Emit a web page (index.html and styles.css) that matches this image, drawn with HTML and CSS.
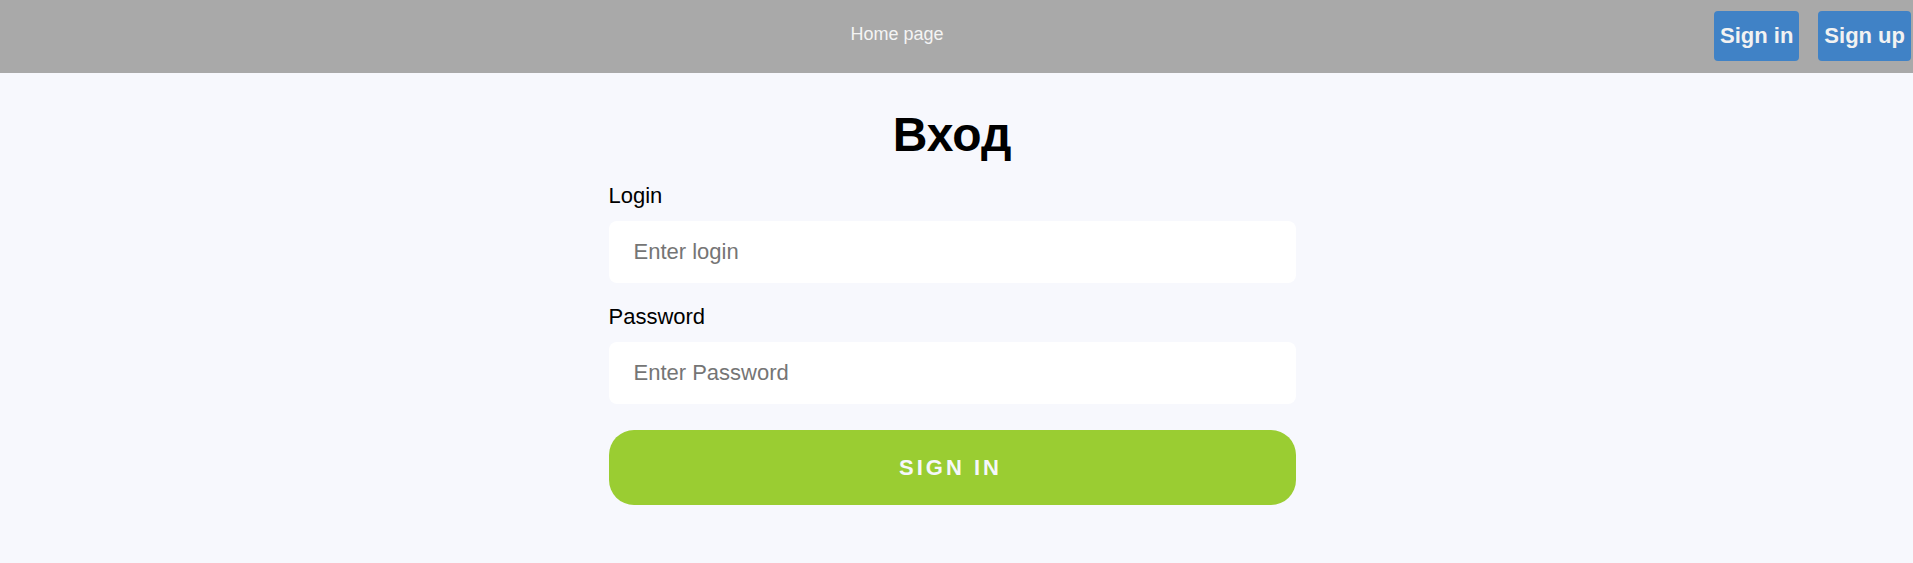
FILE: index.html
```html
<!DOCTYPE html>
<html lang="ru">
<head>
<meta charset="utf-8">
<title>Вход</title>
<link rel="stylesheet" href="styles.css">
</head>
<body>
<header class="topbar">
  <nav class="topbar-nav"><a class="nav-link" href="#">Home page</a></nav>
  <div class="topbar-actions">
    <button class="head-btn" type="button">Sign in</button>
    <button class="head-btn" type="button">Sign up</button>
  </div>
</header>
<main class="page">
  <form class="login-form">
    <h1 class="form-title">Вход</h1>
    <label class="field-label" for="login">Login</label>
    <input class="field-input" id="login" type="text" placeholder="Enter login">
    <label class="field-label field-label--spaced" for="password">Password</label>
    <input class="field-input" id="password" type="password" placeholder="Enter Password">
    <button class="submit-btn" type="button">Sign in</button>
  </form>
</main>
</body>
</html>
```
FILE: styles.css
```css
* { box-sizing: border-box; }
html, body {
  margin: 0;
  padding: 0;
}
body {
  font-family: "Liberation Sans", Arial, sans-serif;
  background: #f7f8fd;
  min-height: 563px;
  overflow: hidden;
}
.topbar {
  height: 73px;
  background: #a9a9a9;
  display: flex;
  align-items: center;
}
.topbar-nav {
  flex: 1;
  display: flex;
  justify-content: center;
  padding-left: 80px;
  padding-bottom: 4px;
}
.nav-link {
  color: #f4f4f4;
  font-size: 18px;
  text-decoration: none;
}
.topbar-actions {
  display: flex;
  gap: 19px;
  margin-right: 2px;
  align-self: flex-start;
  padding-top: 11px;
}
.head-btn {
  height: 50px;
  padding: 0 6px;
  border: none;
  border-radius: 4px;
  background: #4082c6;
  color: #f2f2f2;
  font-family: "Liberation Sans", Arial, sans-serif;
  font-weight: bold;
  font-size: 22px;
}
.page {
  display: flex;
  justify-content: center;
  padding: 34px 9px 0 0;
}
.login-form {
  width: 687px;
  display: flex;
  flex-direction: column;
}
.form-title {
  margin: 0 0 20px;
  font-size: 48px;
  line-height: 56px;
  font-weight: bold;
  text-align: center;
  color: #000;
}
.field-label {
  font-size: 22px;
  line-height: 25px;
  color: #000;
  margin-bottom: 13px;
}
.field-label--spaced {
  margin-top: 21px;
}
.field-input {
  height: 62px;
  border: none;
  border-radius: 8px;
  background: #fff;
  padding: 0 25px;
  font-family: "Liberation Sans", Arial, sans-serif;
  font-size: 22px;
  color: #333;
  outline: none;
}
.field-input::placeholder {
  color: #757575;
}
.submit-btn {
  margin-top: 26px;
  height: 75px;
  border: none;
  border-radius: 25px;
  background: #9acd32;
  color: #f5f7fb;
  font-family: "Liberation Sans", Arial, sans-serif;
  font-weight: bold;
  font-size: 22px;
  letter-spacing: 3px;
  text-transform: uppercase;
  padding-left: 3px;
}
```
